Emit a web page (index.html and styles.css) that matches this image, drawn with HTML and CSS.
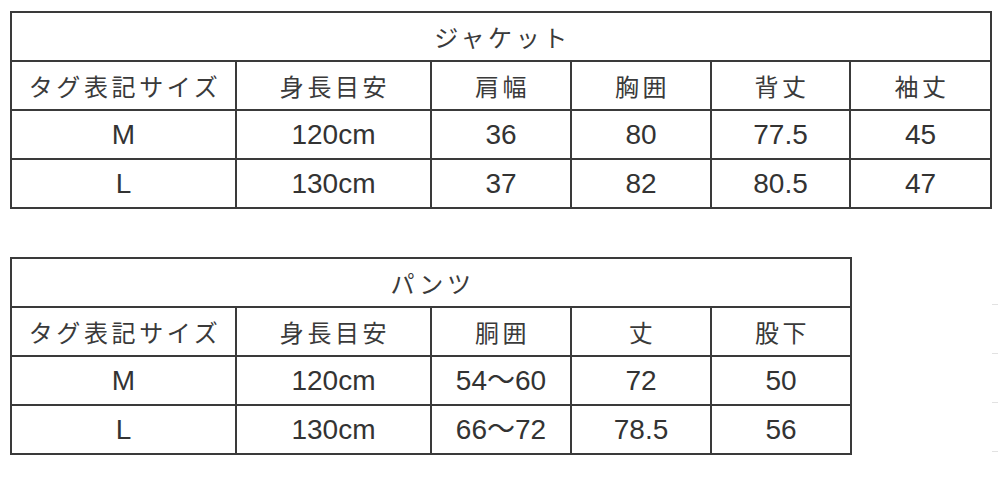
FILE: index.html
```html
<!DOCTYPE html>
<html lang="ja">
<head>
<meta charset="utf-8">
<title>サイズ表</title>
<link rel="stylesheet" href="styles.css">
</head>
<body>
<div class="page">
  <table class="size jacket">
    <colgroup>
      <col class="c1"><col class="c2"><col class="c3"><col class="c4"><col class="c5"><col class="c6">
    </colgroup>
    <tr><td class="jp" colspan="6">ジャケット</td></tr>
    <tr>
      <td class="jp">タグ表記サイズ</td><td class="jp">身長目安</td><td class="jp">肩幅</td><td class="jp">胸囲</td><td class="jp">背丈</td><td class="jp">袖丈</td>
    </tr>
    <tr><td>M</td><td>120cm</td><td>36</td><td>80</td><td>77.5</td><td>45</td></tr>
    <tr><td>L</td><td>130cm</td><td>37</td><td>82</td><td>80.5</td><td>47</td></tr>
  </table>

  <div class="second">
    <table class="size pants">
      <colgroup>
        <col class="c1"><col class="c2"><col class="c3"><col class="c4"><col class="c5">
      </colgroup>
      <tr><td class="jp" colspan="5">パンツ</td></tr>
      <tr>
        <td class="jp">タグ表記サイズ</td><td class="jp">身長目安</td><td class="jp">胴囲</td><td class="jp">丈</td><td class="jp">股下</td>
      </tr>
      <tr><td>M</td><td>120cm</td><td>54〜60</td><td>72</td><td>50</td></tr>
      <tr><td>L</td><td>130cm</td><td>66〜72</td><td>78.5</td><td>56</td></tr>
    </table>
    <div class="ticks">
      <span class="tick"></span><span class="tick"></span><span class="tick"></span><span class="tick"></span>
    </div>
  </div>
</div>
</body>
</html>
```

FILE: styles.css
```css
html, body {
  margin: 0;
  padding: 0;
  background: #ffffff;
}

.page {
  padding: 11px 0 0 10px;
  font-family: "Liberation Sans", "Noto Sans CJK JP", sans-serif;
  color: #333333;
}

.size {
  border-collapse: collapse;
  table-layout: fixed;
}

.size td {
  border: 2px solid #3a3a3a;
  height: 47px;
  padding: 0;
  text-align: center;
  vertical-align: middle;
  font-size: 28px;
  line-height: 1;
  white-space: nowrap;
}

.size td.jp {
  font-family: "Noto Sans CJK JP", sans-serif;
  font-size: 24px;
  letter-spacing: 3.6px;
  text-indent: 3px;
  font-weight: 400;
  color: #3a3a3a;
}

.jacket {
  width: 980px;
}

.pants {
  width: 840px;
}

.c1 { width: 225px; }
.c2 { width: 195px; }
.c3 { width: 140px; }
.c4 { width: 140px; }
.c5 { width: 139px; }
.c6 { width: 141px; }

.pants .c5 { width: 140px; }

.second {
  margin-top: 48px;
  display: flex;
  align-items: flex-start;
}

.ticks {
  margin-left: 140px;
  padding-top: 47px;
  display: flex;
  flex-direction: column;
  gap: 48px;
}

.tick {
  display: block;
  width: 6px;
  height: 1px;
  background: #e2e2e2;
}
```
